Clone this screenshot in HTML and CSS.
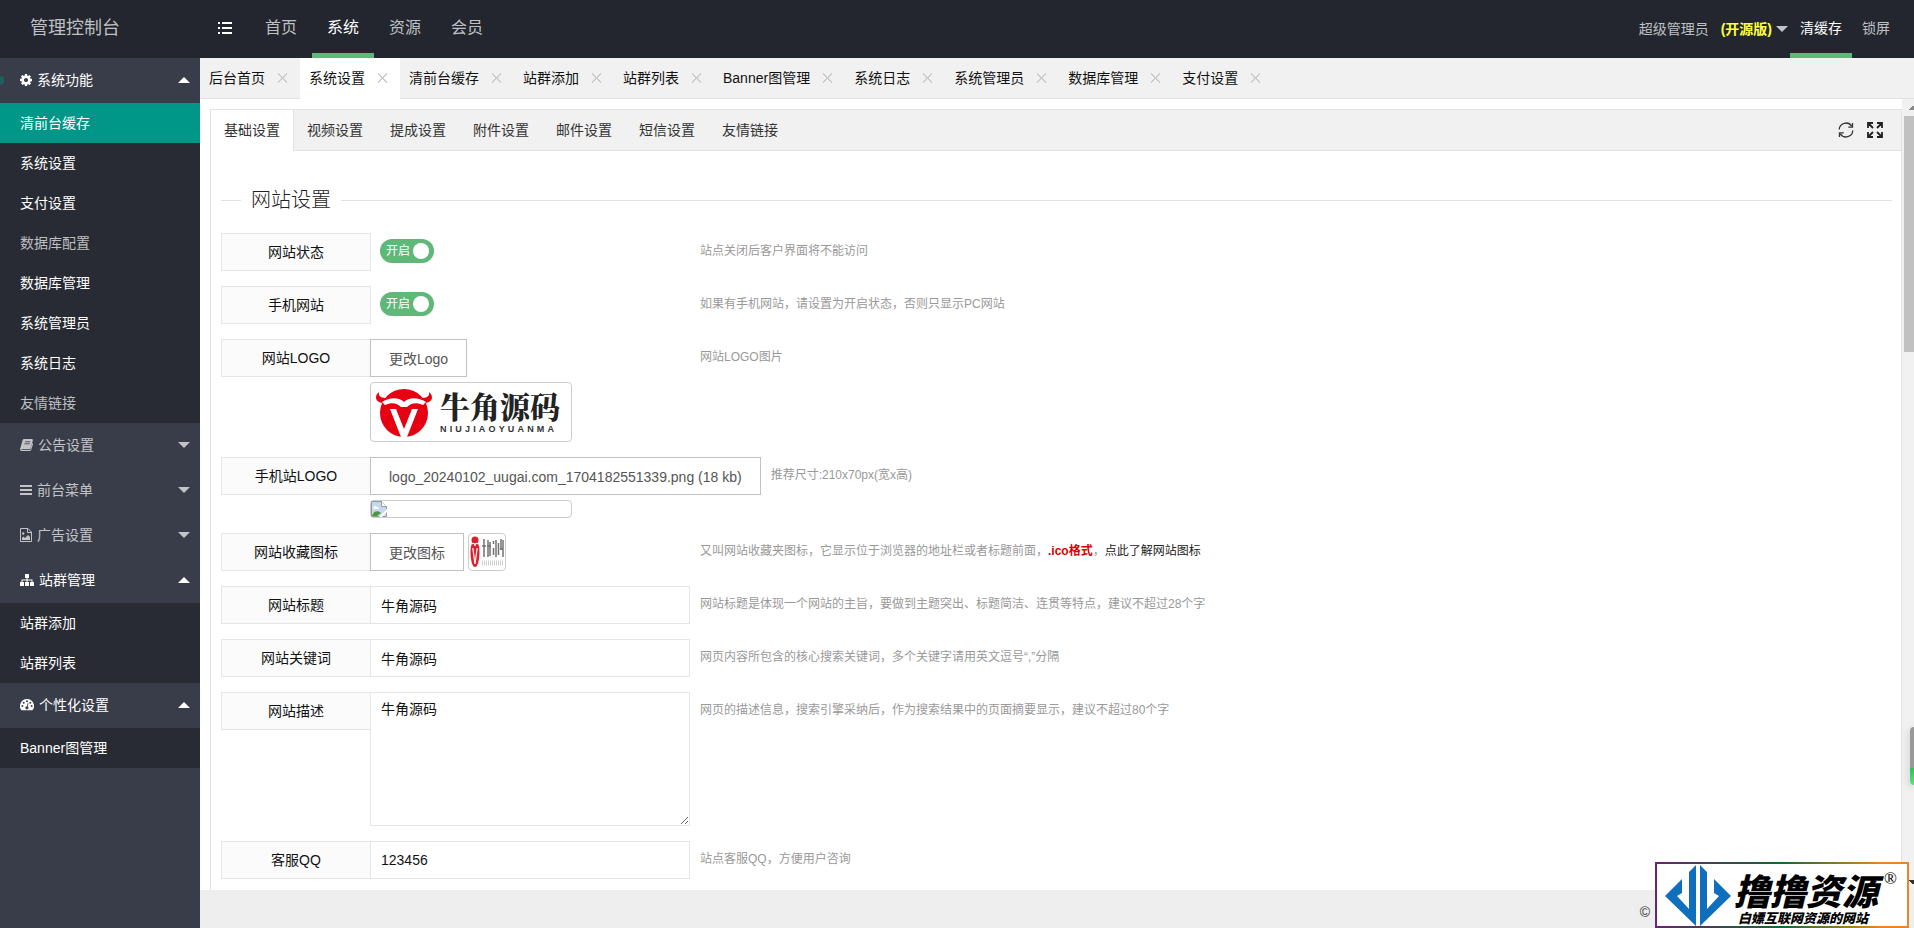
FILE: index.html
```html
<!DOCTYPE html>
<html lang="zh-CN">
<head>
<meta charset="utf-8">
<title>管理控制台</title>
<link rel="stylesheet" href="styles.css">
</head>
<body>
<div class="app">
  <header class="header">
    <a class="brand" href="#">管理控制台</a>
    <button class="menu-toggle" type="button" aria-label="折叠菜单">
      <svg width="14" height="14" viewBox="0 0 14 14"><path d="M0 1h2v2H0zM4 1h10v2H4zM0 6h2v2H0zM4 6h10v2H4zM0 11h2v2H0zM4 11h10v2H4z" fill="currentColor"/></svg>
    </button>
    <nav class="topnav">
      <a href="#">首页</a>
      <a class="on" href="#">系统</a>
      <a href="#">资源</a>
      <a href="#">会员</a>
    </nav>
    <nav class="usernav">
      <a class="user" href="#">超级管理员 <b class="edition">(开源版)</b><i class="caret"></i></a>
      <a class="on" href="#">清缓存</a>
      <a href="#">锁屏</a>
    </nav>
  </header>

  <div class="body">
    <aside class="sidebar">
      <a class="group open marked" href="#">
        <svg width="12" height="12" viewBox="128 128 1536 1536"><path fill="currentColor" d="M1152 896q0-106-75-181t-181-75-181 75-75 181 75 181 181 75 181-75 75-181zm512-109v222q0 12-8 23t-20 13l-185 28q-19 54-39 91 35 50 107 138 10 12 10 25t-9 23q-27 37-99 108t-94 71q-12 0-26-9l-138-108q-44 23-91 38-16 136-29 186-7 28-36 28h-222q-14 0-24.500-8.500t-11.500-21.500l-28-184q-49-16-90-37l-141 107q-10 9-25 9-14 0-25-11-126-114-165-168-7-10-7-23 0-12 8-23 15-21 51-66.500t54-70.500q-27-50-41-99l-183-27q-13-2-21-12.500t-8-23.500v-222q0-12 8-23t19-13l186-28q14-46 39-92-40-57-107-138-10-12-10-24 0-10 9-23 26-36 98.500-107.500t94.500-71.500q13 0 26 10l138 107q44-23 91-38 16-136 29-186 7-28 36-28h222q14 0 24.500 8.500t11.500 21.500l28 184q49 16 90 37l142-107q9-9 24-9 13 0 25 10 129 119 165 170 7 8 7 22 0 12-8 23-15 21-51 66.500t-54 70.500q26 50 41 98l183 28q13 2 21 12.500t8 23.500z"/></svg>
        系统功能<i class="caret"></i></a>
      <div class="sub">
        <a class="current" href="#">清前台缓存</a>
        <a href="#">系统设置</a>
        <a href="#">支付设置</a>
        <a class="dim" href="#">数据库配置</a>
        <a href="#">数据库管理</a>
        <a href="#">系统管理员</a>
        <a href="#">系统日志</a>
        <a class="dim" href="#">友情链接</a>
      </div>
      <a class="group" href="#">
        <svg width="13" height="12" viewBox="0 0 13 12"><path fill="currentColor" d="M4.200 0h7.300c1 0 1.600.7 1.300 1.700L10.500 9c-.3.800-.9 1.200-1.600 1.200H2.200c-.6 0-.9.200-.8.500.1.300.5.400 1 .4h6.900c.6 0 .8-.3 1-.7l2-6.400c.7.300.8.800.6 1.400l-1.700 5.400c-.3.800-.9 1.200-1.600 1.200H2.200C.9 12-.3 10.900.1 9.700L2.500 1.600C2.800.6 3.300 0 4.200 0z"/><path d="M5 2.800h5.400M4.400 4.800h5.400" stroke="#393d49" stroke-width=".8"/></svg>
        公告设置<i class="caret"></i></a>
      <a class="group" href="#">
        <svg width="12" height="12" viewBox="0 0 12 12"><path fill="currentColor" d="M0 1h12v2H0zM0 5h12v2H0zM0 9h12v2H0z"/></svg>
        前台菜单<i class="caret"></i></a>
      <a class="group" href="#">
        <svg width="12" height="14" viewBox="0 0 12 14"><path fill="none" stroke="currentColor" d="M.5.5h7.500l3.500 3.500v9.500H.5zM7.500.5v4h4"/><path fill="currentColor" d="M2 12v-2l1.500-1.500L5 10l3-3 2 2v3zM2 5.500a1.200 1.200 0 1 1 2.400 0 1.200 1.200 0 0 1-2.400 0z"/></svg>
        广告设置<i class="caret"></i></a>
      <a class="group open" href="#">
        <svg width="14" height="12" viewBox="0 0 14 12"><path fill="currentColor" d="M5 0h4v4H7.500v1.500H12.500V8H14v4h-4V8h1.500V6.500h-4V8H9v4H5V8h1.500V6.500h-4V8H4v4H0V8h1.500V5.500h5V4H5z"/></svg>
        站群管理<i class="caret"></i></a>
      <div class="sub">
        <a href="#">站群添加</a>
        <a href="#">站群列表</a>
      </div>
      <a class="group open" href="#">
        <svg width="14" height="12" viewBox="0 0 14 12"><path fill="currentColor" d="M7 0a7 7 0 0 1 5.900 10.800c-.2.300-.4.400-.8.400H1.900c-.4 0-.6-.1-.8-.4A7 7 0 0 1 7 0z"/><g fill="#393d49"><circle cx="2.400" cy="7" r="1"/><circle cx="3.700" cy="3.700" r="1"/><circle cx="7" cy="2.300" r="1"/><circle cx="10.300" cy="3.700" r="1"/><circle cx="11.600" cy="7" r="1"/><path d="M7.700 4l.8.200-.8 3.200a1.600 1.600 0 1 1-.8-.2z"/></g></svg>
        个性化设置<i class="caret"></i></a>
      <div class="sub">
        <a href="#">Banner图管理</a>
      </div>
    </aside>

    <main class="main">
      <nav class="pagetabs">
        <div class="pagetab"><a href="#">后台首页</a><button type="button" aria-label="关闭"></button></div>
        <div class="pagetab active"><a href="#">系统设置</a><button type="button" aria-label="关闭"></button></div>
        <div class="pagetab"><a href="#">清前台缓存</a><button type="button" aria-label="关闭"></button></div>
        <div class="pagetab"><a href="#">站群添加</a><button type="button" aria-label="关闭"></button></div>
        <div class="pagetab"><a href="#">站群列表</a><button type="button" aria-label="关闭"></button></div>
        <div class="pagetab"><a href="#">Banner图管理</a><button type="button" aria-label="关闭"></button></div>
        <div class="pagetab"><a href="#">系统日志</a><button type="button" aria-label="关闭"></button></div>
        <div class="pagetab"><a href="#">系统管理员</a><button type="button" aria-label="关闭"></button></div>
        <div class="pagetab"><a href="#">数据库管理</a><button type="button" aria-label="关闭"></button></div>
        <div class="pagetab"><a href="#">支付设置</a><button type="button" aria-label="关闭"></button></div>
      </nav>

      <div class="view">
        <section class="card">
          <div class="cardtabs">
            <a class="active" href="#">基础设置</a>
            <a href="#">视频设置</a>
            <a href="#">提成设置</a>
            <a href="#">附件设置</a>
            <a href="#">邮件设置</a>
            <a href="#">短信设置</a>
            <a href="#">友情链接</a>
            <div class="tools">
              <button type="button" aria-label="刷新"><svg width="18" height="16" viewBox="0 0 18 16" fill="none" stroke="#333" stroke-width="1.300"><path d="M2.200 7.500A6.800 6.800 0 0 1 14.700 4.200M15.800 8.500A6.800 6.800 0 0 1 3.300 11.800"/><path d="M15.500 1v4.200h-4.200M2.500 15v-4.200h4.200"/></svg></button>
              <button type="button" aria-label="全屏"><svg width="16" height="16" viewBox="0 0 16 16" fill="none" stroke="#222" stroke-width="1.800"><path d="M1 6V1h5M1.500 1.500l4.500 4.500M10 1h5v5M14.500 1.500L10 6M1 10v5h5M1.500 14.500L6 10M15 10v5h-5M14.500 14.500L10 10"/></svg></button>
            </div>
          </div>

          <form class="form">
            <h2 class="legend">网站设置</h2>

            <div class="row">
              <span class="label">网站状态</span>
              <div class="control"><label class="switch">开启<input type="checkbox" checked></label></div>
              <p class="hint">站点关闭后客户界面将不能访问</p>
            </div>
            <div class="row">
              <span class="label">手机网站</span>
              <div class="control"><label class="switch">开启<input type="checkbox" checked></label></div>
              <p class="hint">如果有手机网站，请设置为开启状态，否则只显示PC网站</p>
            </div>
            <div class="row">
              <span class="label">网站LOGO</span>
              <div class="control">
                <button class="upload" type="button">更改Logo</button>
                <div class="preview logo">
                  <svg width="56" height="50" viewBox="0 0 56 50"><circle cx="28" cy="25" r="24" fill="#e60012"/><path fill="#e60012" d="M8 15C-1 15-2 8 3 4c-1 4 2 6 8 6zM48 15c9 0 10-7 5-11 1 4-2 6-8 6z"/><path fill="#fff" d="M6 14c8-5 17-5 22 0 5-5 14-5 22 0l-3 3c-7-3-12-2-16 2h-6c-4-4-9-5-16-2z"/><path fill="#fff" d="M14 21h6l8 20 8-20h6L31 49h-6z"/></svg>
                  <div class="wordmark">
                    <strong>牛角源码</strong>
                    <div class="latin"><span>N</span><span>I</span><span>U</span><span>J</span><span>I</span><span>A</span><span>O</span><span>Y</span><span>U</span><span>A</span><span>N</span><span>M</span><span>A</span></div>
                  </div>
                </div>
              </div>
              <p class="hint">网站LOGO图片</p>
            </div>
            <div class="row">
              <span class="label">手机站LOGO</span>
              <div class="control">
                <button class="upload" type="button">logo_20240102_uugai.com_1704182551339.png (18 kb)</button>
                <div class="preview">
                  <svg width="16" height="16" viewBox="0 0 16 16"><path fill="#c5d8f0" stroke="#999" d="M.5.500h10l5 5v10H.5z"/><path fill="#fff" stroke="#999" d="M10.500.500v5h5"/><path fill="#fff" d="M2 7c0-2 3-3 4-1 2 0 2 2 1 2H3z"/><path fill="#4a9a3c" d="M1 15c1-5 6-6 9-3l-4 3z"/><path fill="#fff" d="M8 16l8-8v3l-5 5z"/></svg>
                </div>
              </div>
              <p class="hint">推荐尺寸:210x70px(宽x高)</p>
            </div>
            <div class="row">
              <span class="label">网站收藏图标</span>
              <div class="control inline">
                <button class="upload" type="button">更改图标</button>
                <div class="favicon">
                  <svg width="36" height="36" viewBox="0 0 36 36"><circle cx="6" cy="6" r="3.500" fill="#dc1f2c"/><ellipse cx="6" cy="19" rx="4.500" ry="14" fill="#dc1f2c"/><path d="M2 10q4-2 4 2 0-4 4-2" fill="none" stroke="#fff" stroke-width="1.200"/><path d="M3.800 14L6 30l2.200-16" fill="none" stroke="#fff" stroke-width="1.200"/><g stroke="#444" stroke-width="1.500" opacity=".75"><path d="M15 5v18M13 12h4M19 6v17M21 8v14M18 12h4M24.500 7v3M24.500 14v7M27 6v17M29.500 9v12M32 5v11M34 6v17M31 15h3"/></g><path d="M13 29h21" stroke="#888" stroke-width="5" stroke-dasharray="1 1" opacity=".4"/></svg>
                </div>
              </div>
              <p class="hint">又叫网站收藏夹图标，它显示位于浏览器的地址栏或者标题前面，<b>.ico格式</b>，<a href="#">点此了解网站图标</a></p>
            </div>
            <div class="row">
              <label class="label" for="title">网站标题</label>
              <div class="control"><input class="field" id="title" type="text" value="牛角源码"></div>
              <p class="hint">网站标题是体现一个网站的主旨，要做到主题突出、标题简洁、连贯等特点，建议不超过28个字</p>
            </div>
            <div class="row">
              <label class="label" for="keywords">网站关键词</label>
              <div class="control"><input class="field" id="keywords" type="text" value="牛角源码"></div>
              <p class="hint">网页内容所包含的核心搜索关键词，多个关键字请用英文逗号“,”分隔</p>
            </div>
            <div class="row">
              <label class="label" for="desc">网站描述</label>
              <div class="control"><textarea class="field area" id="desc">牛角源码</textarea></div>
              <p class="hint">网页的描述信息，搜索引擎采纳后，作为搜索结果中的页面摘要显示，建议不超过80个字</p>
            </div>
            <div class="row">
              <label class="label" for="qq">客服QQ</label>
              <div class="control"><input class="field" id="qq" type="text" value="123456"></div>
              <p class="hint">站点客服QQ，方便用户咨询</p>
            </div>
          </form>
        </section>
        <div class="scrollbar"><i class="arrow up"></i><i class="thumb"></i><i class="arrow down"></i></div>
      </div>

      <footer class="footer">©</footer>
    </main>
  </div>

  <div class="sidefloat"></div>

  <div class="stamp">
    <svg width="66" height="62" viewBox="0 0 66 62" fill="#0f6fbd"><path d="M31 1v61L0 32l17-17v14l-5 3 12 13V8z"/><path d="M35 1v61l31-30-17-17v14l5 3-12 13V8z"/></svg>
    <div class="stamp-text">
      <strong>撸撸资源</strong>
      <span>白嫖互联网资源的网站</span>
    </div>
    <sup>®</sup>
  </div>
</div>
</body>
</html>
```

FILE: styles.css
```css
* { box-sizing: border-box; }

body {
  margin: 0;
  font: 14px/20px "Liberation Sans", "Noto Sans CJK SC", sans-serif;
  color: #111;
  background: #fff;
}

a { color: inherit; text-decoration: none; }
button { padding: 0; border: 0; background: none; font: inherit; color: inherit; cursor: pointer; }
svg { display: block; flex: none; }

.app { display: flex; flex-direction: column; height: 100vh; overflow: hidden; position: relative; }

/* Header */
.header { display: flex; flex: none; height: 58px; padding-right: 14px; background: #23262e; color: #bfc0c3; line-height: 56px; }
.brand { width: 200px; padding-left: 30px; font-size: 18px; }
.menu-toggle { display: flex; align-items: center; width: 50px; padding-left: 18px; padding-bottom: 2px; color: #fff; }
.topnav, .usernav { display: flex; }
.topnav { font-size: 16px; }
.topnav a { padding: 0 15px; }
.usernav { margin-left: auto; }
.usernav a { padding: 0 10px; }
.header .on { color: #fff; border-bottom: 5px solid #5fb878; }
.user { display: flex; align-items: center; }
.usernav .user { padding-right: 2px; }
.edition { margin-left: 12px; color: #ffff3c; }

.caret { width: 0; height: 0; border: 6px solid transparent; border-top-color: #c3c4c8; border-bottom: 0; }
.user .caret { margin-left: 4px; }

/* Sidebar */
.body { display: flex; flex: 1; min-height: 0; }
.sidebar { flex: none; width: 200px; background: #393d49; }
.group { display: flex; align-items: center; gap: 5px; height: 45px; padding: 0 10px 2px 20px; color: #c3c4c8; position: relative; }
.group .caret { margin-left: auto; }
.group.open { color: #fff; }
.group.open .caret { border-top: 0; border-bottom: 6px solid #fff; }
.marked::before { content: ""; position: absolute; left: 0; top: 18px; width: 4px; height: 9px; border-radius: 0 4px 4px 0; background: #1f5f60; }
.sub { background: #282b33; }
.sub a { display: block; padding-left: 20px; line-height: 40px; color: #fff; }
.sub .dim { color: #bebfc2; }
.sub .current { background: #009688; }

/* Open-page tabs */
.main { display: flex; flex-direction: column; flex: 1; min-width: 0; }
.pagetabs { display: flex; flex: none; height: 41px; background: #f1f1f1; border-bottom: 1px solid #e2e2e2; }
.pagetab { display: flex; align-items: center; gap: 13px; height: 41px; padding: 0 13px 1px 9px; }
.pagetab.active { background: #fff; }
.pagetab button { width: 9px; height: 10px; background: linear-gradient(45deg, transparent 46%, #ccc 46%, #ccc 54%, transparent 54%), linear-gradient(-45deg, transparent 46%, #ccc 46%, #ccc 54%, transparent 54%); }

/* Scrolling view */
.view { display: flex; flex: 1; min-height: 0; padding-left: 10px; }
.card { flex: 1; min-width: 0; margin-top: 10px; overflow: hidden; border: 1px solid #e2e2e2; border-bottom: 0; }
.cardtabs { display: flex; gap: 1px; height: 41px; background: #f1f1f1; border-bottom: 1px solid #e2e2e2; color: #333; }
.cardtabs a { padding: 0 13px; line-height: 41px; }
.cardtabs .active { height: 41px; background: #fff; border-right: 1px solid #e2e2e2; }
.cardtabs .active + a { padding-left: 12px; }
.tools { display: flex; align-items: center; gap: 12px; margin-left: auto; padding-right: 18px; }

.scrollbar { display: flex; flex-direction: column; align-items: flex-end; flex: none; width: 12px; background: #f1f1f1; padding-left: 2px; overflow: hidden; }
.thumb { width: 10px; height: 236px; background: #c1c1c1; }
.arrow { width: 7px; height: 17px; flex: none; }
.arrow.up { background: linear-gradient(135deg, transparent 50%, #888 50%) 0 7px / 7px 4px no-repeat; }
.arrow.down { margin-top: auto; background: linear-gradient(45deg, transparent 50%, #333 50%) 0 7px / 7px 4px no-repeat; }

/* Settings form */
.form { padding: 34px 9px 0 10px; }
.legend { display: flex; align-items: center; gap: 10px; margin: 0 0 18px; font-size: 20px; font-weight: 300; line-height: 30px; color: #222; }
.legend::before, .legend::after { content: ""; height: 1px; background: #e2e2e2; }
.legend::before { width: 20px; }
.legend::after { flex: 1; }

.row { display: flex; align-items: flex-start; margin-bottom: 15px; }
.label { flex: none; width: 150px; height: 38px; border: 1px solid #e6e6e6; background: #fbfbfb; line-height: 36px; text-align: center; }
.control { min-width: 320px; margin-left: -1px; }
.control.inline { display: flex; gap: 4px; }
.hint { margin: 0 0 0 10px; padding-top: 8px; font-size: 12px; color: #999; }
.hint b { color: #d00; }
.hint a { color: #222; }

.switch { display: flex; align-items: center; justify-content: space-between; width: 54px; height: 24px; margin: 6px 0 0 10px; padding: 0 5px 0 6px; border-radius: 12px; background: #5fb878; color: #fff; font-size: 12px; cursor: pointer; }
.switch input { appearance: none; width: 16px; height: 16px; margin: 0; border-radius: 8px; background: #fff; }

.upload { display: block; height: 38px; padding: 2px 18px 0; border: 1px solid #c2c2c2; background: #fff; color: #555; white-space: nowrap; }
.preview { display: flex; width: 202px; min-height: 18px; margin-top: 5px; border: 1px solid #ccc; border-radius: 4px; }
.logo { height: 60px; padding: 5px 0 0 5px; gap: 8px; }
.wordmark { display: flex; flex-direction: column; }
.wordmark strong { font: 900 30px/34px "Noto Serif CJK SC", "Noto Sans CJK SC", serif; color: #222; }
.latin { display: flex; justify-content: space-between; width: 114px; font: bold 9px/14px "Liberation Sans", sans-serif; color: #333; }
.favicon { width: 38px; height: 38px; border: 1px solid #ccc; border-radius: 4px; }

.field { display: block; width: 320px; height: 38px; padding: 0 10px; border: 1px solid #e6e6e6; background: #fff; font: inherit; color: #111; }
.area { height: 134px; padding: 6px 10px; resize: vertical; }

.footer { flex: none; height: 38px; padding: 12px 264px 0 0; background: #eee; color: #333; text-align: right; }

/* Floating pieces */
.sidefloat { position: absolute; right: 0; top: 727px; width: 4px; height: 58px; border-radius: 4px 0 0 4px; background: linear-gradient(#999 70%, #2fbf5a 70%, #5fe080); box-shadow: 0 2px 8px #bbb; }
.stamp { position: absolute; right: 5px; bottom: 0; display: flex; width: 254px; height: 66px; padding-left: 8px; border: 2px solid; border-image: linear-gradient(90deg, #6a2470, #13692f 50%, #e8862a 90%) 1; background: #fff; color: #000; font-family: "Noto Sans CJK SC", sans-serif; }
.stamp-text { display: flex; flex-direction: column; gap: 4px; margin-left: 3px; padding-top: 7px; font-style: italic; }
.stamp-text strong { font-size: 36px; font-weight: 900; line-height: 36px; }
.stamp-text span { padding-left: 4px; font-size: 13px; font-weight: 900; line-height: 13px; }
.stamp sup { font: 17px/30px "Liberation Serif", serif; margin-left: 6px; }
```
